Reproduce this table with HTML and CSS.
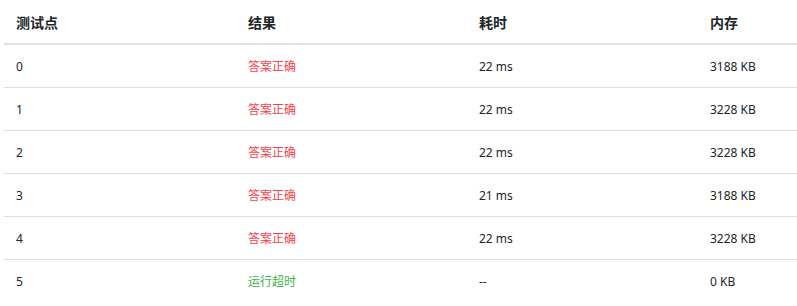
FILE: index.html
```html
<!DOCTYPE html>
<html>
<head>
<meta charset="utf-8">
<link rel="stylesheet" href="styles.css">
</head>
<body>
<table class="result">
  <colgroup>
    <col class="c1"><col class="c2"><col class="c3"><col class="c4">
  </colgroup>
  <thead>
    <tr><th>测试点</th><th>结果</th><th>耗时</th><th>内存</th></tr>
  </thead>
  <tbody>
    <tr><td>0</td><td class="ac">答案正确</td><td>22 ms</td><td>3188 KB</td></tr>
    <tr><td>1</td><td class="ac">答案正确</td><td>22 ms</td><td>3228 KB</td></tr>
    <tr><td>2</td><td class="ac">答案正确</td><td>22 ms</td><td>3228 KB</td></tr>
    <tr><td>3</td><td class="ac">答案正确</td><td>21 ms</td><td>3188 KB</td></tr>
    <tr><td>4</td><td class="ac">答案正确</td><td>22 ms</td><td>3228 KB</td></tr>
    <tr><td>5</td><td class="tle">运行超时</td><td>--</td><td>0 KB</td></tr>
  </tbody>
</table>
</body>
</html>
```

FILE: styles.css
```css
html, body {
  margin: 0;
  padding: 0;
  background: #fff;
  overflow: hidden;
}
body {
  padding-left: 4px;
  font-family: "Noto Sans", "Noto Sans CJK SC", sans-serif;
  color: #212529;
}
.result {
  border-collapse: collapse;
  table-layout: fixed;
  width: 793px;
}
.c1 { width: 232px; }
.c2 { width: 231px; }
.c3 { width: 231px; }
.c4 { width: 99px; }
.result th,
.result td {
  text-align: left;
  padding: 0 12px;
  vertical-align: middle;
  white-space: nowrap;
}
.result th {
  height: 43px;
  font-size: 14px;
  font-weight: 700;
  border-bottom: 2px solid #dee2e6;
}
.result td {
  height: 42px;
  font-size: 12px;
  border-bottom: 1px solid #dee2e6;
}
.result tbody tr:last-child td {
  border-bottom: none;
}
.ac { color: #f5424b; }
.tle { color: #3cb54a; }
```
